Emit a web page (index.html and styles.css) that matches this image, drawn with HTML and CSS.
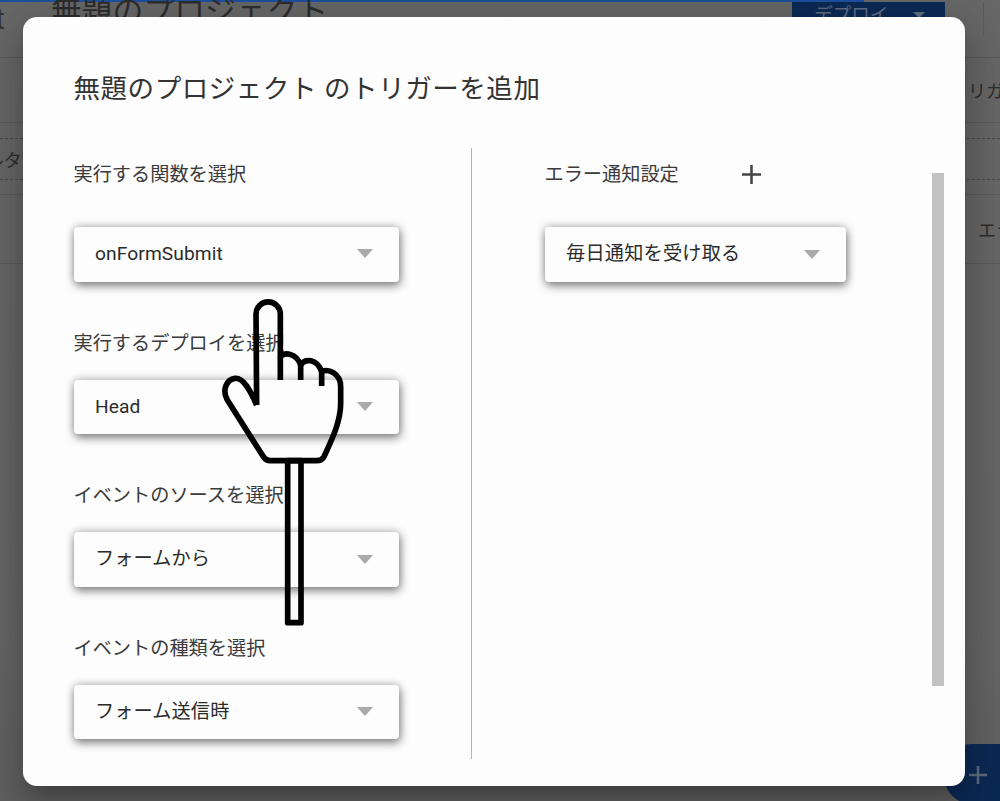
FILE: index.html
```html
<!DOCTYPE html>
<html lang="ja">
<head>
<meta charset="utf-8">
<title>トリガーを追加</title>
<link rel="stylesheet" href="styles.css">
</head>
<body>
<div class="page">
  <div class="progress"></div>
  <header class="topbar">
    <span class="brand">t</span>
    <span class="project">無題のプロジェクト</span>
    <span class="deploy">デプロイ<i class="deploy-arrow"></i></span>
    <span class="vline"></span>
  </header>
  <div class="tool-row"><span class="tool-text">トリガー</span></div>
  <div class="filter-row"><div class="filter-box"><span>フィルタ</span></div></div>
  <div class="head-row"><span class="head-text">エラー</span></div>
  <div class="fab"><svg class="fab-plus" viewBox="0 0 18 18"><path d="M9 0v18M0 9h18"/></svg></div>
</div>

<div class="modal">
  <h1 class="modal-title">無題のプロジェクト のトリガーを追加</h1>
  <div class="modal-body">
    <div class="col-left">
      <div class="label label-first">実行する関数を選択</div>
      <div class="select"><span>onFormSubmit</span><i class="arrow"></i></div>
      <div class="label">実行するデプロイを選択</div>
      <div class="select"><span>Head</span><i class="arrow"></i></div>
      <div class="label">イベントのソースを選択</div>
      <div class="select select-jp"><span>フォームから</span><i class="arrow"></i></div>
      <div class="label">イベントの種類を選択</div>
      <div class="select select-jp"><span>フォーム送信時</span><i class="arrow"></i></div>
    </div>
    <div class="col-right">
      <div class="label label-first label-plus">エラー通知設定
        <svg class="plus" viewBox="0 0 18 18"><path d="M9 0v18M0 9h18"/></svg>
      </div>
      <div class="select select-jp select-right"><span>毎日通知を受け取る</span><i class="arrow"></i></div>
    </div>
    <div class="scrollbar"></div>
  </div>
</div>

<svg class="hand" viewBox="0 0 480 1020">
  <path class="hand-line" d="M263 512H303V998H263Z"/>
  <path class="hand-line" d="M170 345L168 72A36.5 36.5 0 0 1 241 72L241 200C255 185 290 190 302 225C315 205 350 205 365 245C385 235 422 250 422 290L422 340C422 400 390 460 372 500Q366 512 350 512L210 512Q198 512 190 500L82 330C65 300 80 268 105 265C130 262 150 300 170 345"/>
  <path class="hand-line" d="M241 200V270M302 225V270M365 245V288"/>
</svg>
</body>
</html>
```

FILE: styles.css
```css
* { box-sizing: border-box; }
html, body { margin: 0; height: 100%; }
body {
  position: relative;
  width: 1000px;
  height: 801px;
  overflow: hidden;
  background: linear-gradient(#676767, #666 80%, #606060);
  font-family: Roboto, "Noto Sans CJK JP", sans-serif;
  color: #2b2b2b;
}
.page { height: 801px; overflow: hidden; position: relative; }
.progress { width: 864px; height: 1.5px; background: #1c4f9e; }
.topbar {
  height: 56.5px;
  display: flex;
  align-items: flex-start;
  border-bottom: 1px solid #5a5a5a;
}
.brand { width: 51px; margin-left: -5px; padding-top: 2px; font-size: 30px; line-height: 30px; color: #333; }
.project { flex: 0 0 auto; margin-left: 5px; margin-top: -10px; font-size: 30.8px; line-height: 40px; color: #2d2d2d; }
.deploy {
  margin-left: 464px;
  width: 153px;
  height: 45px;
  background: #0c2a56;
  color: #5f6e85;
  font-size: 18.5px;
  line-height: 26px;
  padding: 0 0 0 22px;
  display: flex;
  align-items: flex-start;
}
.deploy-arrow {
  margin: 10px 0 0 25px;
  border-left: 6px solid transparent;
  border-right: 6px solid transparent;
  border-top: 6px solid #5f6e85;
}
.vline { margin-left: 38px; width: 1px; height: 33px; background: #5a5a5a; }
.tool-row {
  height: 65px;
  border-bottom: 1px solid #5a5a5a;
  display: flex;
  align-items: center;
  padding-left: 950px;
  white-space: nowrap;
}
.tool-text, .head-text { font-size: 18px; color: #2d2d2d; }
.filter-row { height: 72px; border-bottom: 1px solid #5a5a5a; padding-top: 15px; }
.filter-box {
  height: 42px;
  margin-left: -55px;
  border-top: 1px dashed #4a4a4a;
  border-bottom: 1px dashed #4a4a4a;
  display: flex;
  align-items: center;
  padding-left: 5px;
  font-size: 18px;
  color: #2d2d2d;
}
.head-row {
  height: 69px;
  border-bottom: 1px solid #5a5a5a;
  display: flex;
  align-items: center;
  padding-left: 978px;
  white-space: nowrap;
}
.fab {
  position: absolute;
  left: 944px;
  top: 744px;
  width: 84px;
  height: 60px;
  border-radius: 28px;
  background: #0c2a56;
}
.fab-plus {
  position: absolute;
  left: 25px;
  top: 22px;
  width: 18px;
  height: 18px;
  fill: none;
  stroke: #5f6b7c;
  stroke-width: 2.5;
}
.modal {
  position: absolute;
  left: 23px;
  top: 17px;
  width: 942px;
  height: 769px;
  padding: 0 21px 0 50.5px;
  background: #fdfdfd;
  border-radius: 14px;
  box-shadow: 0 11px 15px -7px rgba(0,0,0,.2), 0 24px 38px 3px rgba(0,0,0,.14), 0 9px 46px 8px rgba(0,0,0,.12);
}
.modal-title {
  margin: 0;
  padding-top: 54px;
  height: 131px;
  font-weight: 400;
  font-size: 26.5px;
  line-height: 36px;
  letter-spacing: .55px;
  color: #333;
}
.modal-body { display: flex; height: 611px; }
.col-left { width: 398.5px; border-right: 1px solid #b5b5b5; }
.col-right { width: 398px; padding-left: 72.5px; }
.label {
  height: 26px;
  margin-top: 48px;
  margin-bottom: 24px;
  font-size: 19.2px;
  line-height: 26px;
  padding-top: 1px;
  color: #3a3a3a;
  white-space: nowrap;
}
.label-first { margin-top: 13px; margin-bottom: 40px; }
.label-plus { display: flex; align-items: center; }
.plus {
  margin-left: 63px;
  width: 19px;
  height: 19px;
  fill: none;
  stroke: #444;
  stroke-width: 2.4;
}
.select {
  width: 325px;
  height: 54.5px;
  padding: 0 26px 1px 21.5px;
  display: flex;
  align-items: center;
  justify-content: space-between;
  background: #fdfdfd;
  border-radius: 4px;
  font-size: 19.2px;
  letter-spacing: .1px;
  color: #2b2b2b;
  box-shadow: 0 -1px 8px rgba(0,0,0,.22), 1px 4px 10px rgba(0,0,0,.45);
}
.select-jp { padding-bottom: 4px; }
.select-jp .arrow { margin-top: 4px; }
.select-right { width: 301px; letter-spacing: .2px; }
.arrow {
  flex: none;
  border-left: 8px solid transparent;
  border-right: 8px solid transparent;
  border-top: 9px solid #aaa;
}
.scrollbar {
  margin: 25px 0 0 62px;
  width: 12px;
  height: 513px;
  background: #c2c2c2;
}
.hand {
  position: absolute;
  left: 200px;
  top: 290px;
  width: 160px;
  height: 340px;
}
.hand-line {
  fill: none;
  stroke: #000;
  stroke-width: 17;
  stroke-linejoin: round;
  stroke-linecap: butt;
}
```
